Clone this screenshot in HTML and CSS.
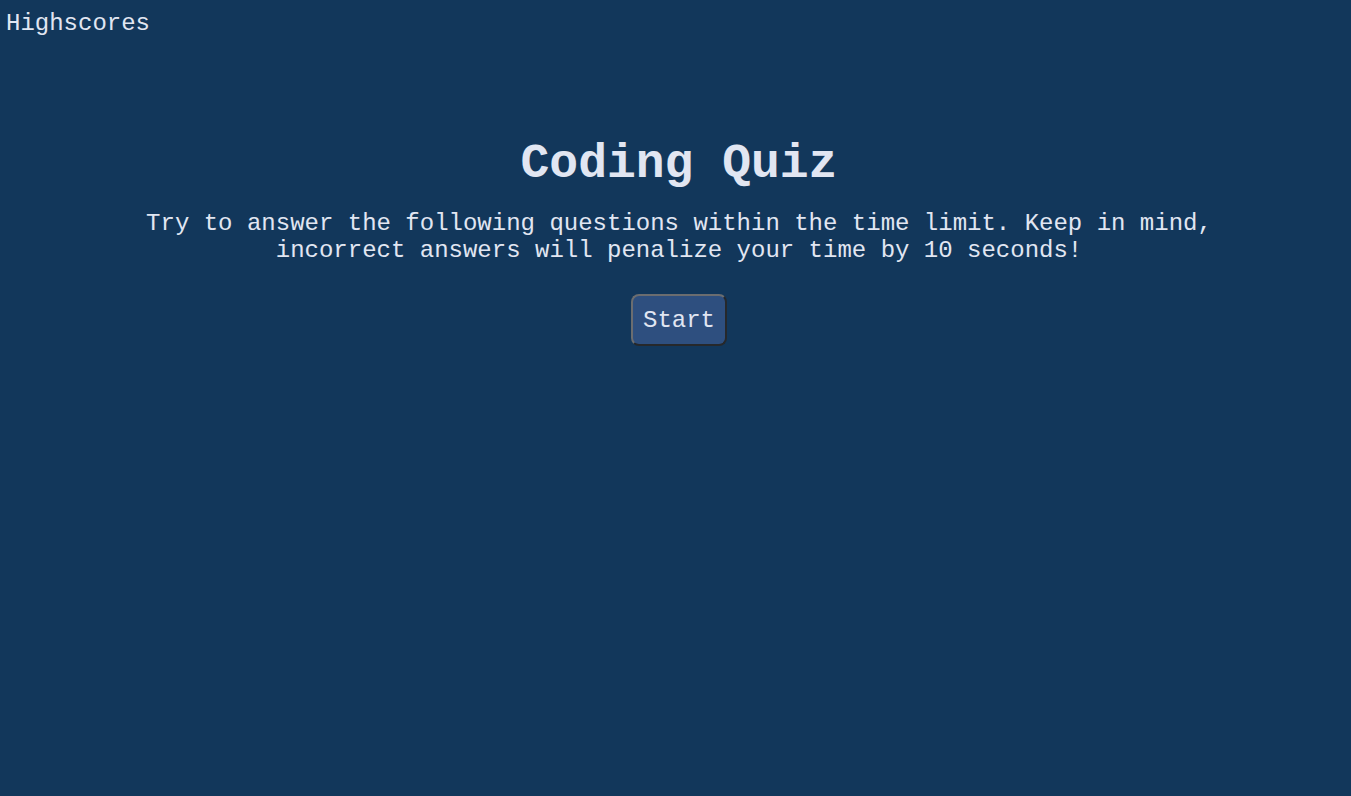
FILE: index.html
```html
<!DOCTYPE html>
<html lang="en">
<head>
<meta charset="utf-8">
<title>Coding Quiz</title>
<link rel="stylesheet" href="styles.css">
</head>
<body>
<header class="top-bar">
  <a class="highscores-link" href="#">Highscores</a>
</header>
<main class="intro">
  <h1 class="intro-title">Coding Quiz</h1>
  <p class="intro-text">Try to answer the following questions within the time limit. Keep in mind, incorrect answers will penalize your time by 10 seconds!</p>
  <button class="start-btn" type="button">Start</button>
</main>
</body>
</html>
```

FILE: styles.css
```css
html, body {
  margin: 0;
  padding: 0;
  height: 100%;
}
body {
  background: #12375b;
  color: #e1e6f2;
  font-family: "Liberation Mono", "Courier New", monospace;
  font-size: 24px;
}
.top-bar {
  padding: 10px 6px 0;
}
.highscores-link {
  color: #e1e6f2;
  text-decoration: none;
}
.intro {
  display: flex;
  flex-direction: column;
  align-items: center;
  text-align: center;
  padding-top: 100px;
  padding-left: 7px;
}
.intro-title {
  font-size: 48px;
  font-weight: bold;
  margin: 0;
  line-height: 54px;
}
.intro-text {
  margin: 19px 0 0;
  max-width: 1080px;
  line-height: 27px;
}
.start-btn {
  margin-top: 30px;
  font-family: inherit;
  font-size: 24px;
  line-height: 27px;
  color: #e1e6f2;
  background: #2e4f7f;
  padding: 11px 10px 10px;
  border: 2px solid;
  border-color: #6b6d70 #26282b #26282b #6b6d70;
  border-radius: 8px;
  cursor: pointer;
}
```
